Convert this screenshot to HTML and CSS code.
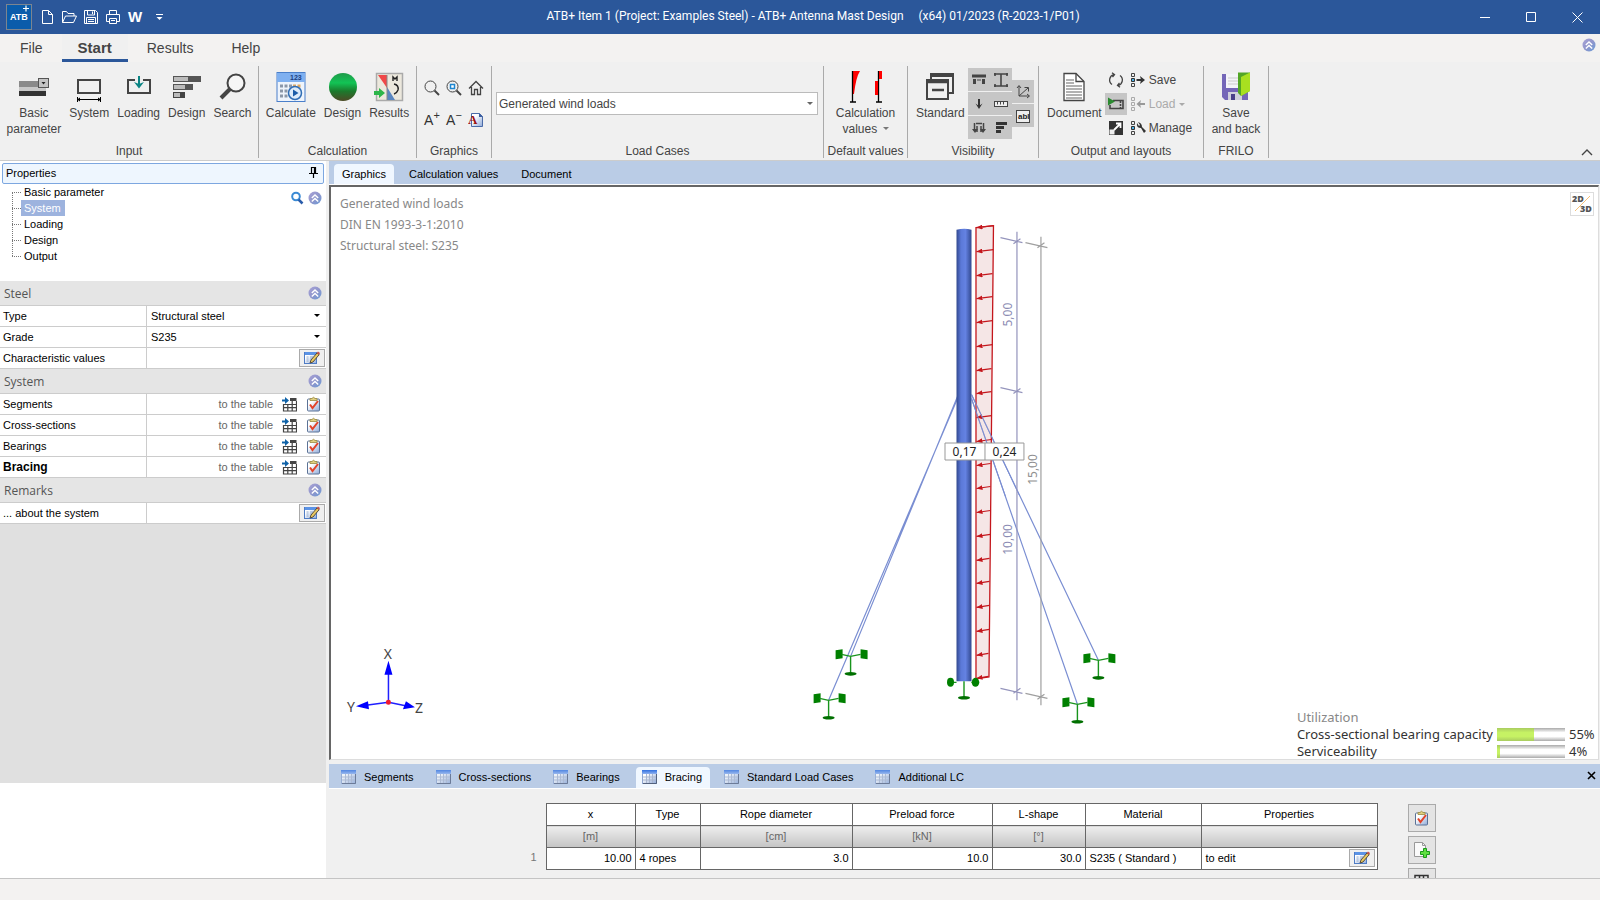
FILE: index.html
```html
<!DOCTYPE html>
<html lang="en">
<head>
    <meta charset="UTF-8">
    <meta name="viewport" content="width=device-width, initial-scale=1.0">
    <title>ATB+ Antenna Mast Design</title>
    <link rel="stylesheet" href="styles.css">
</head>
<body>
    <!-- shared icons -->
    <svg class="defs" width="0" height="0" aria-hidden="true">
        <defs>
            <linearGradient id="gRound" x1="0" y1="0" x2="1" y2="1">
                <stop offset="0" stop-color="#a9a3d6"/><stop offset=".5" stop-color="#9096cc"/><stop offset="1" stop-color="#6a9bd6"/>
            </linearGradient>
            <linearGradient id="gPole">
                <stop offset="0" stop-color="#31488f"/><stop offset=".3" stop-color="#5b79d8"/><stop offset=".6" stop-color="#6482e2"/><stop offset="1" stop-color="#31488f"/>
            </linearGradient>
            <linearGradient id="gBall" x1="0" y1="0" x2="0" y2="1">
                <stop offset="0" stop-color="#1f9a4a"/><stop offset=".35" stop-color="#12c455"/><stop offset=".65" stop-color="#1b7a2c"/><stop offset="1" stop-color="#4d4a26"/>
            </linearGradient>
            <linearGradient id="gBlue" x1="0" y1="0" x2="0" y2="1">
                <stop offset="0" stop-color="#2f6fe0"/><stop offset="1" stop-color="#8fb2f0"/>
            </linearGradient>
            <linearGradient id="gSheet" x1="0" y1="0" x2="1" y2="1">
                <stop offset=".3" stop-color="#ffffff"/><stop offset="1" stop-color="#8ea9d8"/>
            </linearGradient>
            <marker id="loadArrow" viewBox="0 0 6 5" refX="6" refY="2.5" markerWidth="6" markerHeight="5" markerUnits="userSpaceOnUse" orient="auto">
                <path d="M0 0L6 2.5L0 5z" fill="#c4161c"/>
            </marker>
            <symbol id="up" viewBox="0 0 14 14">
                <circle cx="7" cy="7" r="6.5" fill="url(#gRound)"/>
                <path d="M3.8 7L7 4L10.2 7M3.8 10.5L7 7.5L10.2 10.5" fill="none" stroke="#fff" stroke-width="1.4"/>
            </symbol>
            <symbol id="edit" viewBox="0 0 16 14">
                <rect x=".5" y="1.5" width="12" height="11" fill="url(#gSheet)" stroke="#4f7cc4"/>
                <rect x="1" y="1" width="11" height="3" fill="#5b93e6"/>
                <path d="M2.5 6h2M2.5 8h2M2.5 10h2M6 6h3M6 8h2" stroke="#8fa8cc"/>
                <path d="M6 12L7 9L13 2L15.2 3.6L9 11z" fill="#e8c860" stroke="#4a4030" stroke-width=".9"/>
                <path d="M12.6 2L14 .5L16 2L15 3.8z" fill="#c0504a"/>
            </symbol>
            <symbol id="toTable" viewBox="0 0 15 15">
                <path d="M0 3.5h5" stroke="#0f62a8" stroke-width="2"/><path d="M3 0L7 3.5L3 7z" fill="#0f62a8"/>
                <rect x="8" y="1" width="6.5" height="3" fill="#444"/>
                <path d="M1.5 7.500h13v6.500h-13zM1.5 10.700h13M5.8 7v7M10.2 4v10M14.5 4v4" fill="none" stroke="#444" stroke-width="1.2"/>
            </symbol>
            <symbol id="check" viewBox="0 0 15 16">
                <rect x="1.5" y="3" width="12" height="12" rx="1" fill="url(#gSheet)" stroke="#5b7296"/>
                <path d="M4 4.5V2.5H6Q7.5 0 9 2.5h2v2z" fill="#e0cf80" stroke="#9c8a40" stroke-width=".8"/>
                <path d="M4 8.500L6.500 12L12 5" fill="none" stroke="#e2432a" stroke-width="2"/>
            </symbol>
            <symbol id="grid" viewBox="0 0 15 14">
                <rect x=".5" y=".5" width="14" height="13" fill="url(#gSheet)" stroke="#8fa6d0"/>
                <rect x="0" y="0" width="15" height="4" fill="url(#gBlue)"/>
                <path d="M1 7h13M1 10h13M4.500 4v9M7.500 4v9M10.500 4v9" stroke="#a9b6cf"/>
                <path d="M14.500 4v9.500H1" fill="none" stroke="#52617e"/>
            </symbol>
            <symbol id="anchor" viewBox="-18 -8 36 28" overflow="visible">
                <path d="M-15 -6L-8 -7V2L-15 3zM10 -7L17 -6V3L10 2z" fill="#008000"/>
                <path d="M-9 -2L0 0L10 -2M0 0V17" fill="none" stroke="#18941c" stroke-width="1.4"/>
                <ellipse cx="0" cy="17.5" rx="6" ry="1.8" fill="#007000"/>
            </symbol>
        </defs>
    </svg>

    <header class="titlebar">
        <div class="quick">
            <svg class="logo" width="26" height="26" viewBox="0 0 26 26">
                <rect x=".5" y=".5" width="25" height="25" fill="#0a5cab" stroke="#7c8590"/>
                <text x="4" y="16" class="logo-text">ATB</text>
                <path d="M20 1.500v6M17 4.500h6" stroke="#fff" stroke-width="1.2"/>
            </svg>
            <button aria-label="New"><svg width="16" height="16" viewBox="0 0 16 16"><path d="M3.500 1.500h6l4 4v9h-10zM9.500 1.500v4h4"/></svg></button>
            <button aria-label="Open"><svg width="16" height="16" viewBox="0 0 16 16"><path d="M1.500 13.500v-11h4l1.500 2h6v2.500M1.500 13.500l3-6.500h11l-3 6.500z"/></svg></button>
            <button aria-label="Save"><svg width="16" height="16" viewBox="0 0 16 16"><path d="M1.500 1.500h11l2 2v11h-13zM4.500 1.500v4.500h7v-4.500M9.500 2.500v2.500M3.500 14v-5.500h9v5.500M5 10.500h6M5 12.500h6"/></svg></button>
            <button aria-label="Print"><svg width="16" height="16" viewBox="0 0 16 16"><path d="M4.500 5.500v-4h7v4M4.500 12.500h-3v-7h13v7h-3M4.500 9.500h7v5h-7zM6 11.500h4"/></svg></button>
            <button class="word" aria-label="Word">W</button>
            <button aria-label="More"><svg width="9" height="8" viewBox="0 0 9 8"><path d="M1 1.500h7"/><path d="M1.500 4h6l-3 3z" class="solid"/></svg></button>
        </div>
        <h1>ATB+ Item 1 (Project: Examples Steel) - ATB+ Antenna Mast Design <span>(x64) 01/2023 (R-2023-1/P01)</span></h1>
        <div class="window-buttons">
            <button aria-label="Minimize"><svg width="11" height="11" viewBox="0 0 11 11"><path d="M0 5.500h10"/></svg></button>
            <button aria-label="Maximize"><svg width="11" height="11" viewBox="0 0 11 11"><path d="M.5 .5h9v9h-9z"/></svg></button>
            <button aria-label="Close"><svg width="11" height="11" viewBox="0 0 11 11"><path d="M.5 .5l10 10M10.500 .5l-10 10"/></svg></button>
        </div>
    </header>

    <nav class="menu">
        <a href="#file">File</a>
        <a href="#start" class="active">Start</a>
        <a href="#results">Results</a>
        <a href="#help">Help</a>
        <button class="round" aria-label="Collapse"><svg width="14" height="14"><use href="#up"/></svg></button>
    </nav>

    <section class="ribbon">
        <div class="group g-input">
            <div class="tools">
                <button class="big"><svg width="32" height="32" viewBox="0 0 32 32">
                    <rect x="1" y="10" width="27" height="6" fill="#8a8a8a"/><rect x="1" y="16" width="27" height="4" fill="#c8c8c8"/><rect x="1" y="20" width="27" height="5" fill="#333"/>
                    <rect x="20.500" y="7.500" width="10" height="9" fill="#c4c4c4" stroke="#555"/><path d="M23.500 11h4l-2 2.500z" fill="#222"/>
                </svg>Basic<br>parameter</button>
                <button class="big"><svg width="32" height="32" viewBox="0 0 32 32">
                    <rect x="5" y="9" width="22" height="13" fill="none" stroke="#444" stroke-width="2"/>
                    <path d="M4 28.500h24M4.500 26v5M27.500 26v5" stroke="#000"/><path d="M4 28.500l3-2v4zM28 28.500l-3-2v4z"/>
                </svg>System</button>
                <button class="big"><svg width="32" height="32" viewBox="0 0 32 32">
                    <path d="M12 9H5v13h22V9h-7" fill="none" stroke="#444" stroke-width="2"/><path d="M16 5v8" stroke="#0b8584" stroke-width="2"/><path d="M11 11l5 6.500l5-6.500l-5 2z" fill="#0b8584"/>
                </svg>Loading</button>
                <button class="big"><svg width="32" height="32" viewBox="0 0 32 32">
                    <rect x="2" y="5" width="28" height="6" fill="#555"/><rect x="3" y="6" width="14" height="4" fill="#bbb"/>
                    <rect x="2" y="13" width="20" height="6" fill="#555"/><rect x="3" y="14" width="11" height="4" fill="#bbb"/>
                    <rect x="2" y="21" width="12" height="6" fill="#444"/><rect x="3" y="22" width="6" height="4" fill="#bbb"/>
                </svg>Design</button>
                <button class="big"><svg width="32" height="32" viewBox="0 0 32 32">
                    <circle cx="20" cy="12" r="8.500" fill="#f6f6f6" stroke="#444" stroke-width="2"/><path d="M14 18L5 27" stroke="#444" stroke-width="4"/>
                </svg>Search</button>
            </div>
            <h2>Input</h2>
        </div>
        <div class="group g-calc">
            <div class="tools">
                <button class="big"><svg width="32" height="32" viewBox="0 0 32 32">
                    <rect x="2" y="1.500" width="28" height="29" fill="#eef4fc" stroke="#4a7fca"/><rect x="2" y="2" width="28" height="9" fill="#7fb0f0"/>
                    <text x="15" y="9" class="tiny">123</text>
                    <path d="M5 15h12M5 20h9M5 25h9" stroke="#8b97a8" stroke-width="3" stroke-dasharray="3 1.500"/><path d="M18 15h9" stroke="#e0a860" stroke-width="3" stroke-dasharray="3 1.500"/>
                    <circle cx="20" cy="22" r="6.500" fill="#dcebfa" stroke="#2f6db5" stroke-width="1.500"/><path d="M18 18.500l5.500 3.500l-5.500 3.500z" fill="#1b5ca8"/>
                </svg>Calculate</button>
                <button class="big"><svg width="32" height="32" viewBox="0 0 32 32"><circle cx="16" cy="16" r="14" fill="url(#gBall)"/></svg>Design</button>
                <button class="big"><svg width="32" height="32" viewBox="0 0 32 32">
                    <rect x="3.500" y="2.500" width="26" height="27" fill="#ece8dd" stroke="#aaa" stroke-width="1.500"/>
                    <path d="M5 4h9v13z" fill="#f04848"/><path d="M14 16v13h8z" fill="#5a86c0"/><path d="M14 4v25" stroke="#888"/>
                    <path d="M20 10V6l2 2l2-2v4M21 13q5 1 4 6q-1 3-4 4" fill="none" stroke="#222" stroke-width="1.4"/>
                    <path d="M1 20h5v-3l6 5l-6 5v-3H1z" fill="#2db54a"/>
                </svg>Results</button>
            </div>
            <h2>Calculation</h2>
        </div>
        <div class="group g-graphics">
            <div class="tools icon-grid">
                <button aria-label="Zoom"><svg width="16" height="16" viewBox="0 0 16 16"><circle cx="6.500" cy="6.500" r="5.500" class="ln"/><path d="M10.500 10.500l4.500 4.500" class="ln" stroke-width="2"/></svg></button>
                <button aria-label="Zoom window"><svg width="16" height="16" viewBox="0 0 16 16"><circle cx="6.500" cy="6.500" r="5.500" class="ln"/><rect x="4.500" y="4.500" width="4" height="4" fill="#fff" stroke="#1c86d1" stroke-width="1.500"/><path d="M10.500 10.500l4.500 4.500" class="ln" stroke-width="2"/></svg></button>
                <button aria-label="Home"><svg width="16" height="16" viewBox="0 0 16 16"><path d="M1 8.500L8 1.500L15 8.500M3.500 7v7.500h3v-5h3v5h3V7" class="ln" stroke-width="1.3"/></svg></button>
                <button class="letter" aria-label="Larger text">A<sup>+</sup></button>
                <button class="letter" aria-label="Smaller text">A<sup>−</sup></button>
                <button aria-label="Text report"><svg width="16" height="16" viewBox="0 0 16 16"><path d="M3.500 1.500h8l3 3v10h-11z" fill="url(#gSheet)" stroke="#4a6aa8"/><path d="M11 1v4h4" fill="#3c5fa0"/><text x="0" y="12" class="red-a">A</text></svg></button>
            </div>
            <h2>Graphics</h2>
        </div>
        <div class="group g-load">
            <div class="tools">
                <label class="drop">
                    <select aria-label="Load case"><option>Generated wind loads</option></select>
                </label>
            </div>
            <h2>Load Cases</h2>
        </div>
        <div class="group g-default">
            <div class="tools">
                <button class="big"><svg width="32" height="32" viewBox="0 0 32 32">
                    <path d="M2 0h8q-4 6-6 23H2z" fill="#f00"/><path d="M2.500 0v31M0 31h6M28.500 0v31M26 31h6" stroke="#000" stroke-width="1.3"/>
                    <rect x="25" y="10" width="3" height="14" fill="#f00"/><rect x="29" y="0" width="3" height="8" fill="#f00"/>
                </svg>Calculation<br>values <i class="caret"></i></button>
            </div>
            <h2>Default values</h2>
        </div>
        <div class="group g-vis">
            <div class="tools">
                <button class="big"><svg width="32" height="32" viewBox="0 0 32 32">
                    <path d="M7 8V3h22v19h-4" fill="none" stroke="#444" stroke-width="2"/><path d="M7 5h22" stroke="#444" stroke-width="2"/>
                    <rect x="3" y="9" width="21" height="19" fill="#f0f0f0" stroke="#444" stroke-width="2"/><path d="M3 11h21M8 19h12" stroke="#444" stroke-width="2.500"/>
                </svg>Standard</button>
                <div class="toggles">
                    <button aria-label="Supports"><svg width="16" height="16" viewBox="0 0 16 16"><path d="M1 4h14M3.500 7v5M12.500 7v5" stroke="#444" stroke-width="3"/><path d="M6 8h4" stroke="#444"/></svg></button>
                    <button aria-label="Section"><svg width="16" height="16" viewBox="0 0 16 16"><path d="M1 2h14M1 14h14M8 2v12M2 1v3M14 1v3M2 12v3M14 12v3" stroke="#444" stroke-width="1.600"/></svg></button>
                    <button aria-label="Loads"><svg width="16" height="16" viewBox="0 0 16 16"><path d="M8 3v7" stroke="#333" stroke-width="2"/><path d="M4.500 7.500L8 10l3.500-2.500L8 13z" fill="#333"/></svg></button>
                    <button aria-label="Dimensions"><svg width="16" height="16" viewBox="0 0 16 16"><rect x="1.500" y="5.500" width="13" height="5" fill="#eee" stroke="#444"/><path d="M4.500 6v2.500M7.500 6v2.500M10.500 6v2.500" stroke="#444"/></svg></button>
                    <button aria-label="Reactions"><svg width="16" height="16" viewBox="0 0 16 16"><path d="M5 3.500h6M3.500 3v8M12.500 3v8M6 6v6M10 6v6" stroke="#444" stroke-width="1.500"/><path d="M1 9l3 4l3-4zM9 9l3 4l3-4z" fill="#444"/></svg></button>
                    <button aria-label="Utilization"><svg width="16" height="16" viewBox="0 0 16 16"><path d="M3 3.500h11M3 7.500h8M3 11.500h5" stroke="#333" stroke-width="3"/></svg></button>
                </div>
                <div class="toggles one">
                    <button aria-label="Axes"><svg width="16" height="16" viewBox="0 0 16 16"><path d="M4 2v10h10M4 12L13 4M2 4l2-2.500L6 4M12 10l2.500 2L12 14M9.500 3.500h4v4" class="ln"/></svg></button>
                    <button aria-label="Labels"><svg width="16" height="16" viewBox="0 0 16 16"><rect x="1.500" y="2.500" width="13" height="12" fill="#eee" stroke="#444"/><text x="3" y="11" class="abl">abl</text></svg></button>
                </div>
            </div>
            <h2>Visibility</h2>
        </div>
        <div class="group g-out">
            <div class="tools">
                <button class="big"><svg width="32" height="32" viewBox="0 0 32 32">
                    <path d="M6 2.500h12l8 8v19H6z" fill="#fff" stroke="#444" stroke-width="1.3"/><path d="M18 2.500v8h8" fill="none" stroke="#444" stroke-width="1.3"/>
                    <path d="M8 9h8M8 12h8M8 15h16M8 18h16M8 21h16M8 24h16M8 27h16" stroke="#666" stroke-width="1.2"/>
                </svg>Document</button>
                <div class="stack">
                    <button aria-label="Refresh"><svg width="16" height="16" viewBox="0 0 16 16"><path d="M4 12.500A5.500 5.500 0 0 1 6 2.600M12 3.500A5.500 5.500 0 0 1 10 13.400M4 .8l2.500 1.800L4.500 5M12 15.200l-2.500-1.800l2-2.400" class="ln" stroke-width="1.3"/></svg></button>
                    <button class="on" aria-label="Film"><svg width="16" height="16" viewBox="0 0 16 16"><path d="M5 4.500h10v8H2V9" class="ln" stroke-width="1.600"/><path d="M12.500 5v8" stroke="#444" stroke-dasharray="2 1" stroke-width="1.600"/><path d="M0 1.500l7 4l-7 4z" fill="#2a8a30"/></svg></button>
                    <button aria-label="Enlarge"><svg width="16" height="16" viewBox="0 0 16 16"><rect x="1" y="1" width="14" height="14" fill="#333"/><rect x="1.500" y="9.500" width="5" height="5" fill="#eee"/><path d="M6 10l6-6M8 3.500h4.500V8" fill="none" stroke="#fff" stroke-width="1.800"/></svg></button>
                </div>
                <div class="stack wide">
                    <button><svg width="16" height="16" viewBox="0 0 16 16"><path d="M1.500 1.500h3v3h-3zM1.500 11.500h3v3h-3z" class="ln"/><path d="M1.500 6.500h3v3h-3z" fill="#4ab0e8" stroke="#333"/><path d="M6.500 8h6" stroke="#333" stroke-width="2"/><path d="M10 4l5 4l-5 4l1-4z" fill="#333"/></svg>Save</button>
                    <button disabled><svg width="16" height="16" viewBox="0 0 16 16"><path d="M1.500 1.500h3v3h-3zM1.500 6.500h3v3h-3zM1.500 11.500h3v3h-3z" fill="none" stroke="#aaa"/><path d="M9 8h6" stroke="#999" stroke-width="2"/><path d="M11 4L6.500 8L11 12l-1-4z" fill="#999"/></svg>Load <i class="caret"></i></button>
                    <button><svg width="16" height="16" viewBox="0 0 16 16"><path d="M1.500 1.500h3v3h-3zM1.500 11.500h3v3h-3z" class="ln"/><path d="M1.500 6.500h3v3h-3z" fill="#4ab0e8" stroke="#333"/><path d="M7 3q-1 5 4 5l3 5l2-2l-4-4q0-4-4-5l2 3l-1 1z" fill="#333"/></svg>Manage</button>
                </div>
            </div>
            <h2>Output and layouts</h2>
        </div>
        <div class="group g-frilo">
            <div class="tools">
                <button class="big"><svg width="32" height="32" viewBox="0 0 32 32">
                    <path d="M2 3h26v26H5l-3-3z" fill="#7466b8"/><rect x="6" y="3" width="16" height="14" fill="#f4f4f8"/><path d="M8 7h11M8 10h11M8 13h11" stroke="#ccc"/>
                    <rect x="8" y="21" width="14" height="8" fill="#d0d0dc"/><rect x="11" y="23" width="4" height="6" fill="#4a3f8a"/>
                    <path d="M18 1.500h12V20l-9 5l-3-3z" fill="#52a626"/><path d="M21 6l9-4.500V20l-9 5z" fill="#a8e020"/>
                </svg>Save<br>and back</button>
            </div>
            <h2>FRILO</h2>
        </div>
        <button class="fold" aria-label="Fold ribbon"><svg width="12" height="7" viewBox="0 0 12 7"><path d="M1 6l5-5l5 5" class="ln" stroke-width="1.4"/></svg></button>
    </section>

    <main>
        <aside class="side">
            <div class="side-title">Properties
                <button aria-label="Pin"><svg width="9" height="11" viewBox="0 0 9 11"><path d="M2.500 6V.5h4V6M5.500 1v5M0 6.500h9M4.500 6.500V11" fill="none" stroke="#000" stroke-width="1.2"/></svg></button>
            </div>
            <div class="tree">
                <ul>
                    <li><a href="#basic">Basic parameter</a></li>
                    <li><a href="#system" class="selected">System</a></li>
                    <li><a href="#loading">Loading</a></li>
                    <li><a href="#design">Design</a></li>
                    <li><a href="#output">Output</a></li>
                </ul>
                <div class="tree-tools">
                    <button class="round" aria-label="Find"><svg width="14" height="14" viewBox="0 0 14 14"><circle cx="6" cy="5.500" r="3.800" fill="#fff" stroke="#3a8ad4" stroke-width="2"/><path d="M8.500 8.500l4 4" stroke="#2a5caa" stroke-width="2.500"/></svg></button>
                    <button class="round" aria-label="Collapse all"><svg width="14" height="14"><use href="#up"/></svg></button>
                </div>
            </div>

            <h3>Steel <button class="round" aria-label="Collapse Steel"><svg width="14" height="14"><use href="#up"/></svg></button></h3>
            <div class="row"><label for="type">Type</label><div class="cell drop"><select id="type"><option>Structural steel</option></select></div></div>
            <div class="row"><label for="grade">Grade</label><div class="cell drop"><select id="grade"><option>S235</option></select></div></div>
            <div class="row"><label for="charval">Characteristic values</label><div class="cell"><input id="charval" type="text"><button class="edit" aria-label="Edit"><svg width="16" height="14"><use href="#edit"/></svg></button></div></div>

            <h3>System <button class="round" aria-label="Collapse System"><svg width="14" height="14"><use href="#up"/></svg></button></h3>
            <div class="row"><span>Segments</span><div class="cell links"><a href="#segments">to the table</a><svg width="15" height="15"><use href="#toTable"/></svg><svg width="15" height="16"><use href="#check"/></svg></div></div>
            <div class="row"><span>Cross-sections</span><div class="cell links"><a href="#cross">to the table</a><svg width="15" height="15"><use href="#toTable"/></svg><svg width="15" height="16"><use href="#check"/></svg></div></div>
            <div class="row"><span>Bearings</span><div class="cell links"><a href="#bearings">to the table</a><svg width="15" height="15"><use href="#toTable"/></svg><svg width="15" height="16"><use href="#check"/></svg></div></div>
            <div class="row"><span class="current">Bracing</span><div class="cell links"><a href="#bracing">to the table</a><svg width="15" height="15"><use href="#toTable"/></svg><svg width="15" height="16"><use href="#check"/></svg></div></div>

            <h3>Remarks <button class="round" aria-label="Collapse Remarks"><svg width="14" height="14"><use href="#up"/></svg></button></h3>
            <div class="row"><label for="about">... about the system</label><div class="cell"><input id="about" type="text"><button class="edit" aria-label="Edit remark"><svg width="16" height="14"><use href="#edit"/></svg></button></div></div>
            <div class="filler"></div>
        </aside>

        <section class="work">
            <nav class="tabs">
                <a href="#graphics" class="active">Graphics</a>
                <a href="#calc">Calculation values</a>
                <a href="#doc">Document</a>
            </nav>
            <div class="canvas">
                <svg class="scene" viewBox="330 187 1268 571" role="img" aria-label="Mast">
                    <!-- ropes -->
                    <path d="M957 396L850 656M957 398L828 700M971 394L1098 660M971 398L1077 704" fill="none" stroke="#7a8ed2" stroke-width="1.2"/>
                    <!-- mast -->
                    <path d="M956 229q8-2 15 0V681h-15z" fill="url(#gPole)"/>
                    <!-- wind load -->
                    <path d="M975.500 227L993 225L988.500 676.500L975.500 678.500z" fill="#e8c8c8" fill-opacity=".45" stroke="#c4161c" stroke-width="1.3"/>
                    <g stroke="#c4161c" stroke-width="1.2">
                        <line x1="993" y1="225" x2="976" y2="227" marker-end="url(#loadArrow)"/>
                        <line x1="993" y1="249" x2="976" y2="251" marker-end="url(#loadArrow)"/>
                        <line x1="992" y1="273" x2="976" y2="275" marker-end="url(#loadArrow)"/>
                        <line x1="992" y1="296" x2="976" y2="298" marker-end="url(#loadArrow)"/>
                        <line x1="992" y1="320" x2="976" y2="322" marker-end="url(#loadArrow)"/>
                        <line x1="992" y1="344" x2="976" y2="346" marker-end="url(#loadArrow)"/>
                        <line x1="991" y1="368" x2="976" y2="370" marker-end="url(#loadArrow)"/>
                        <line x1="991" y1="391" x2="976" y2="393" marker-end="url(#loadArrow)"/>
                        <line x1="991" y1="415" x2="976" y2="417" marker-end="url(#loadArrow)"/>
                        <line x1="991" y1="439" x2="976" y2="441" marker-end="url(#loadArrow)"/>
                        <line x1="990" y1="463" x2="976" y2="465" marker-end="url(#loadArrow)"/>
                        <line x1="990" y1="486" x2="976" y2="488" marker-end="url(#loadArrow)"/>
                        <line x1="990" y1="510" x2="976" y2="512" marker-end="url(#loadArrow)"/>
                        <line x1="990" y1="534" x2="976" y2="536" marker-end="url(#loadArrow)"/>
                        <line x1="989" y1="558" x2="976" y2="560" marker-end="url(#loadArrow)"/>
                        <line x1="989" y1="581" x2="976" y2="583" marker-end="url(#loadArrow)"/>
                        <line x1="989" y1="605" x2="976" y2="607" marker-end="url(#loadArrow)"/>
                        <line x1="989" y1="629" x2="976" y2="631" marker-end="url(#loadArrow)"/>
                        <line x1="988" y1="653" x2="976" y2="655" marker-end="url(#loadArrow)"/>
                        <line x1="988" y1="676" x2="976" y2="678" marker-end="url(#loadArrow)"/>
                    </g>
                    <path d="M971 394L1019 495M971 398L1005 496" stroke="#7a8ed2"/>
                    <!-- dimensions -->
                    <path d="M1016.500 231V700M1000 237L1022 242M1000 387L1022 392M1000 688L1022 693M1013 243l7-5M1013 393l7-5M1013 693l7-5" fill="none" stroke="#9494bc" stroke-width="1.2"/>
                    <path d="M1040.500 236V705M1025 242L1047 247M1025 693L1047 698M1037 247l7-5M1037 699l7-5" fill="none" stroke="#a0a0a0" stroke-width="1.2"/>
                    <text class="dim" text-anchor="middle" transform="translate(1012 314) rotate(-90)">5,00</text>
                    <text class="dim" text-anchor="middle" transform="translate(1012 539) rotate(-90)">10,00</text>
                    <text class="dim gray" text-anchor="middle" transform="translate(1037 469) rotate(-90)">15,00</text>
                    <!-- values -->
                    <path d="M944.500 442.500h79v17h-79zM984.500 442.500v17" fill="#fff" stroke="#999"/>
                    <text class="value" x="964" y="456" text-anchor="middle">0,17</text>
                    <text class="value" x="1004" y="456" text-anchor="middle">0,24</text>
                    <!-- supports -->
                    <use href="#anchor" x="832" y="648" width="36" height="28"/>
                    <use href="#anchor" x="810" y="692" width="36" height="28"/>
                    <use href="#anchor" x="1080" y="652" width="36" height="28"/>
                    <use href="#anchor" x="1059" y="696" width="36" height="28"/>
                    <path d="M950 682h6M971 682h5M963.500 681v16" stroke="#18941c" stroke-width="1.4"/>
                    <ellipse cx="950" cy="682" rx="3.500" ry="4.500" fill="#008000"/><ellipse cx="975" cy="682" rx="3.800" ry="4.500" fill="#008000"/>
                    <ellipse cx="963.500" cy="697.500" rx="6" ry="1.800" fill="#007000"/>
                    <!-- axes -->
                    <path d="M387.500 702V670M387.500 702L365 705M387.500 702L407 706" stroke="#2020ff" stroke-width="1.500"/>
                    <path d="M387.500 660.500l4 14h-8zM355 706l12-5l1 8zM414 707l-9-6l-3 8z" fill="#00f"/>
                    <circle cx="387.500" cy="702" r="2.500" fill="#f01830"/>
                    <text class="axis" x="387" y="659" text-anchor="middle">X</text>
                    <text class="axis" x="350" y="712" text-anchor="middle">Y</text>
                    <text class="axis" x="418" y="713" text-anchor="middle">Z</text>
                </svg>
                <div class="note">
                    <p>Generated wind loads</p>
                    <p>DIN EN 1993-3-1:2010</p>
                    <p>Structural steel: S235</p>
                </div>
                <button class="view" aria-label="2D/3D"><svg width="22" height="22" viewBox="0 0 22 22"><path d="M4 18L19 3" stroke="#f5c078"/><text x="1" y="9">2D</text><text x="9" y="19">3D</text></svg></button>
                <div class="usage">
                    <span class="head">Utilization</span>
                    <span>Cross-sectional bearing capacity</span><div class="bar"><div style="width: 55%"></div></div><span>55%</span>
                    <span>Serviceability</span><div class="bar"><div style="width: 4%"></div></div><span>4%</span>
                </div>
            </div>

            <nav class="tabs tables">
                <a href="#segments"><svg width="15" height="14"><use href="#grid"/></svg>Segments</a>
                <a href="#cross"><svg width="15" height="14"><use href="#grid"/></svg>Cross-sections</a>
                <a href="#bearings"><svg width="15" height="14"><use href="#grid"/></svg>Bearings</a>
                <a href="#bracing" class="active"><svg width="15" height="14"><use href="#grid"/></svg>Bracing</a>
                <a href="#standard"><svg width="15" height="14"><use href="#grid"/></svg>Standard Load Cases</a>
                <a href="#additional"><svg width="15" height="14"><use href="#grid"/></svg>Additional LC</a>
                <button class="close" aria-label="Close table"><svg width="9" height="9" viewBox="0 0 9 9"><path d="M1 1l7 7M8 1l-7 7" stroke="#000" stroke-width="1.600"/></svg></button>
            </nav>
            <div class="dock">
                <div class="row-number">1</div>
                <table>
                    <colgroup><col class="c-x"><col class="c-type"><col class="c-rope"><col class="c-force"><col class="c-shape"><col class="c-mat"><col class="c-prop"></colgroup>
                    <thead>
                        <tr><th>x</th><th>Type</th><th>Rope diameter</th><th>Preload force</th><th>L-shape</th><th>Material</th><th>Properties</th></tr>
                        <tr class="units"><td>[m]</td><td></td><td>[cm]</td><td>[kN]</td><td>[°]</td><td></td><td></td></tr>
                    </thead>
                    <tbody>
                        <tr><td class="num">10.00</td><td>4 ropes</td><td class="num">3.0</td><td class="num">10.0</td><td class="num">30.0</td><td>S235 ( Standard )</td><td><div class="with-edit">to edit<button class="edit" aria-label="Edit properties"><svg width="16" height="14"><use href="#edit"/></svg></button></div></td></tr>
                    </tbody>
                </table>
                <div class="dock-tools">
                    <button aria-label="Check"><svg width="15" height="16"><use href="#check"/></svg></button>
                    <button aria-label="Add row"><svg width="16" height="16" viewBox="0 0 16 16"><path d="M.5 .5h8l3 3v11h-11z" fill="#fafafa" stroke="#999"/><path d="M8.500 .5v3h3" fill="none" stroke="#999"/><path d="M9.500 6.500h3v3h3v3h-3v3h-3v-3h-3v-3h3z" fill="#5fe040" stroke="#1a9a1a"/></svg></button>
                    <button aria-label="Table"><svg width="15" height="16" viewBox="0 0 15 16"><path d="M1 1.500h13v13H1zM1 6h13M1 10h13M5.500 1v13M9.500 1v13" fill="none" stroke="#333" stroke-width="1.500"/></svg></button>
                </div>
            </div>
        </section>
    </main>
    <footer></footer>
</body>
</html>
```
FILE: styles.css
```css
* {
    box-sizing: border-box;
}
body {
    margin: 0;
    height: 100vh;
    display: flex;
    flex-direction: column;
    font-family: "Liberation Sans", Arial, sans-serif;
    font-size: 11px;
    color: #000;
    background-color: #f0f0f0;
    overflow: hidden;
}
h1, h2, h3, p, ul {
    margin: 0;
    padding: 0;
    font-weight: normal;
}
button, select, input {
    font: inherit;
    color: inherit;
    border: none;
    background: none;
    padding: 0;
    margin: 0;
}
a {
    color: inherit;
    text-decoration: none;
}
svg {
    display: block;
    flex: none;
}
.defs {
    position: absolute;
}
.ln {
    fill: none;
    stroke: #444;
}

/* title bar */
.titlebar {
    display: flex;
    align-items: center;
    height: 34px;
    background-color: #2b579a;
    color: #fff;
}
.titlebar h1 {
    flex: 1;
    text-align: center;
    font-family: Roboto, "Noto Sans", sans-serif;
    font-size: 12px;
    padding-bottom: 2px;
}
.titlebar h1 span {
    margin-left: 12px;
}
.quick {
    display: flex;
    align-items: center;
    gap: 6px;
    padding-left: 6px;
}
.titlebar svg path {
    fill: none;
    stroke: #fff;
}
.titlebar svg .solid {
    fill: #fff;
    stroke: none;
}
.logo {
    margin-right: 1px;
}
.logo-text {
    font-size: 9px;
    font-weight: bold;
    fill: #fff;
}
.word {
    font-size: 15px;
    line-height: 16px;
    font-weight: bold;
    margin: 0 7px 0 1px;
}
.window-buttons {
    display: flex;
    justify-content: flex-end;
}
.window-buttons button {
    width: 46px;
    height: 34px;
    display: flex;
    align-items: center;
    justify-content: center;
}

/* menu */
.menu {
    display: flex;
    align-items: stretch;
    height: 28px;
    padding-left: 1px;
    background-color: #f3f2f1;
    font-size: 14px;
    color: #444;
}
.menu a {
    padding: 5px 19px 0;
    line-height: 18px;
}
.menu .active {
    font-size: 15px;
    font-weight: bold;
    padding: 5px 16px 0;
    border-bottom: 3px solid #2b579a;
    background-color: #f0f0f0;
}
.menu .round {
    margin: 4px 4px 0 auto;
    align-self: flex-start;
}

/* ribbon */
.ribbon {
    display: flex;
    height: 99px;
    padding-top: 4px;
    border-bottom: 1px solid #ccc;
    font-size: 12px;
    color: #444;
}
.group {
    display: flex;
    flex-direction: column;
    justify-content: space-between;
    border-right: 1px solid #aaa;
    height: 92px;
}
.group h2 {
    font-size: 12px;
    line-height: 14px;
    text-align: center;
    white-space: nowrap;
}
.tools {
    display: flex;
    justify-content: center;
    align-items: flex-start;
    gap: 8px;
}
.g-input { width: 259px; }
.g-calc { width: 158px; }
.g-graphics { width: 75px; }
.g-load { width: 332px; }
.g-default { width: 84px; }
.g-vis { width: 131px; }
.g-out { width: 165px; }
.g-frilo { width: 65px; }
.big {
    line-height: 16px;
    padding-top: 5px;
}
.big svg {
    margin: 0 auto 2px;
    overflow: visible;
}
.caret {
    display: inline-block;
    border: 3px solid transparent;
    border-top-color: #777;
    border-bottom: none;
    margin: 0 0 3px 2px;
}
.icon-grid {
    display: grid;
    grid-template-columns: repeat(3, 16px);
    gap: 16px 6px;
    padding-top: 14px;
}
.icon-grid button {
    height: 16px;
}
.letter {
    font-size: 14px;
    line-height: 16px;
    color: #333;
    white-space: nowrap;
}
.letter sup {
    font-size: 11px;
    line-height: 0;
}
.red-a {
    font: bold 13px "Liberation Serif", serif;
    fill: #9a1010;
}
.tiny {
    font-size: 7px;
    font-weight: bold;
    fill: #1c3f80;
}
.abl {
    font-size: 8px;
    font-weight: bold;
    fill: #222;
}
.drop {
    position: relative;
    flex: 1;
    display: block;
}
.drop select {
    appearance: none;
    width: 100%;
}
.drop::after {
    content: "";
    position: absolute;
    right: 5px;
    top: 50%;
    border: 3px solid transparent;
    border-top-color: #666;
    border-bottom: none;
    margin-top: -2px;
    pointer-events: none;
}
.g-load .drop {
    margin: 26px 5px 0 4px;
}
.g-load select {
    height: 23px;
    border: 1px solid #bbb;
    background-color: #fff;
    padding-left: 2px;
}
.g-vis .tools {
    gap: 0;
    justify-content: flex-start;
    padding-left: 8px;
}
.toggles {
    display: grid;
    grid-template-columns: 22px 22px;
    grid-auto-rows: 23px;
    row-gap: 1px;
    margin: 2px 0 0 3px;
}
.toggles button {
    display: flex;
    align-items: center;
    justify-content: center;
    background-color: #c6c6c6;
}
.toggles.one {
    grid-template-columns: 22px;
    margin: 14px 0 0;
}
.g-out .tools {
    gap: 3px;
    justify-content: flex-start;
    padding-left: 8px;
}
.stack {
    display: flex;
    flex-direction: column;
    gap: 2px;
    margin-top: 3px;
}
.stack button {
    width: 22px;
    height: 22px;
    display: flex;
    align-items: center;
    justify-content: center;
}
.stack .on {
    background-color: #c6c6c6;
}
.stack.wide button {
    width: auto;
    justify-content: flex-start;
    gap: 3px;
}
.stack button:disabled {
    color: #aaa;
}
.stack button:disabled .caret {
    border-top-color: #aaa;
    margin: 0 0 0 1px;
}
.fold {
    margin: auto 7px 4px auto;
}

/* main area */
main {
    flex: 1;
    display: flex;
    min-height: 0;
}
.side {
    width: 326px;
    margin-right: 3px;
    display: flex;
    flex-direction: column;
    background-color: #fff;
}
.side-title {
    display: flex;
    justify-content: space-between;
    align-items: center;
    height: 21px;
    margin: 2px 2px 0;
    padding: 0 5px 2px 3px;
    border: 1px solid #7da7e0;
    border-radius: 2px;
    background-color: #eef6fe;
}
.tree {
    display: flex;
    justify-content: space-between;
    height: 97px;
}
.tree ul {
    list-style: none;
    padding-left: 12px;
}
.tree li {
    display: flex;
    align-items: center;
    height: 16px;
    position: relative;
}
.tree li::before {
    content: "";
    width: 9px;
    border-top: 1px dotted #777;
}
.tree li + li::after {
    content: "";
    position: absolute;
    left: 0;
    top: -8px;
    height: 16px;
    border-left: 1px dotted #777;
}
.tree a {
    padding: 0 4px 0 3px;
    line-height: 16px;
}
.tree .selected {
    background-color: #9db3de;
    color: #fff;
}
.tree-tools {
    display: flex;
    gap: 4px;
    padding: 7px 4px 0 0;
    align-items: flex-start;
}
.side h3 {
    display: flex;
    justify-content: space-between;
    align-items: center;
    height: 25px;
    padding: 0 4px;
    font-family: "Open Sans", "Noto Sans", sans-serif;
    font-size: 12px;
    color: #555;
    background-color: #e5e5e5;
    border-bottom: 1px solid #ccc;
}
.row {
    display: flex;
    height: 21px;
    line-height: 20px;
    border-bottom: 1px solid #ccc;
    background-color: #fff;
}
.row > label,
.row > span {
    width: 147px;
    padding-left: 3px;
    border-right: 1px solid #ccc;
}
.row .current {
    font-weight: bold;
    font-size: 12px;
}
.cell {
    flex: 1;
    min-width: 0;
    display: flex;
    align-items: center;
}
.cell select,
.cell input {
    flex: 1;
    min-width: 0;
    height: 20px;
    padding-left: 4px;
}
.cell.drop::after {
    right: 6px;
    border-top-color: #000;
}
.links {
    justify-content: flex-end;
    gap: 9px;
    padding-right: 5px;
    color: #666;
}
.edit {
    display: flex;
    align-items: center;
    justify-content: center;
    width: 26px;
    height: 18px;
    margin-right: 1px;
    border: 1px solid #aaa;
    background-color: #f0f0f0;
}
.filler {
    flex: 1;
    background-color: #e0e0e0;
    margin-bottom: 95px;
}

/* work area */
.work {
    flex: 1;
    min-width: 0;
    display: flex;
    flex-direction: column;
}
.tabs {
    display: flex;
    align-items: flex-end;
    height: 24px;
    padding-left: 5px;
    background-color: #bacce6;
    border-bottom: 1px solid #fff;
}
.tabs a {
    display: flex;
    align-items: center;
    height: 20px;
    padding: 0 8px;
    margin-right: 7px;
}
.tabs .active {
    background-color: #f0f7ff;
    border-radius: 4px 4px 0 0;
}
.canvas {
    flex: 1;
    min-height: 0;
    position: relative;
    background-color: #fff;
    border: 1px solid #ddd;
    border-top: 2px solid #666;
    border-left: 2px solid #666;
    margin-right: 1px;
}
.scene {
    width: 100%;
    height: 100%;
}
.note,
.usage,
.scene text {
    font-family: "Noto Sans", "Open Sans", sans-serif;
    font-size: 12px;
}
.note {
    position: absolute;
    left: 9px;
    top: 6px;
    line-height: 21px;
    color: #888;
}
.scene .dim {
    fill: #8c8cb4;
}
.scene .gray {
    fill: #909090;
}
.scene .value {
    fill: #222;
}
.scene .axis {
    font-size: 14px;
    fill: #444;
}
.view {
    position: absolute;
    right: 4px;
    top: 5px;
    border: 1px solid #ddd;
}
.view text {
    font-family: "Open Sans", sans-serif;
    font-size: 9px;
    font-weight: 800;
    fill: #555;
}
.usage {
    position: absolute;
    right: 3px;
    bottom: -1px;
    display: grid;
    grid-template-columns: auto 68px 26px;
    column-gap: 4px;
    align-items: center;
    line-height: 17px;
    font-size: 13px;
    color: #333;
}
.usage .head {
    grid-column: 1 / -1;
    color: #888;
}
.bar {
    height: 13px;
    background: linear-gradient(#aaa, #fff 35%, #fff 65%, #aaa);
}
.bar div {
    height: 100%;
    background: linear-gradient(#a9cc60, #c6f264 35%, #c6f264 65%, #a9cc60);
}
.tables {
    margin-top: 4px;
    height: 25px;
    padding-left: 6px;
}
.tables a {
    height: 21px;
    gap: 8px;
    padding: 0 8px 2px 6px;
    margin-right: 8px;
}
.tables a:not(.active) svg {
    opacity: .75;
}
.close {
    margin: 0 4px 8px auto;
}
.dock {
    display: grid;
    grid-template-columns: 1fr auto 1fr;
    height: 89px;
    padding: 14px 6px 0 0;
    overflow: hidden;
}
.row-number {
    text-align: right;
    padding: 48px 9px 0 0;
    color: #777;
}
table {
    border-collapse: collapse;
    table-layout: fixed;
    width: 832px;
    align-self: start;
    background-color: #fff;
}
.c-x { width: 89px; }
.c-type { width: 65px; }
.c-rope { width: 152px; }
.c-force { width: 140px; }
.c-shape { width: 93px; }
.c-mat { width: 116px; }
th, td {
    height: 22px;
    padding: 0 4px 1px;
    border: 1px solid #666;
    font-weight: normal;
    white-space: nowrap;
}
.units td {
    text-align: center;
    color: #666;
    background: linear-gradient(#eee, #c4c4c4);
}
td.num {
    text-align: right;
    padding-right: 3px;
}
.with-edit {
    display: flex;
    align-items: center;
    justify-content: space-between;
    margin-right: -3px;
}
.dock-tools {
    display: flex;
    flex-direction: column;
    gap: 4px;
    padding: 1px 0 0 30px;
}
.dock-tools button {
    display: flex;
    flex: none;
    align-items: center;
    justify-content: center;
    width: 28px;
    height: 28px;
    border: 1px solid #aaa;
    background-color: #e4e4e4;
}
footer {
    height: 22px;
    background-color: #f3f2f1;
    border-top: 1px solid #c4c4c4;
}
```
